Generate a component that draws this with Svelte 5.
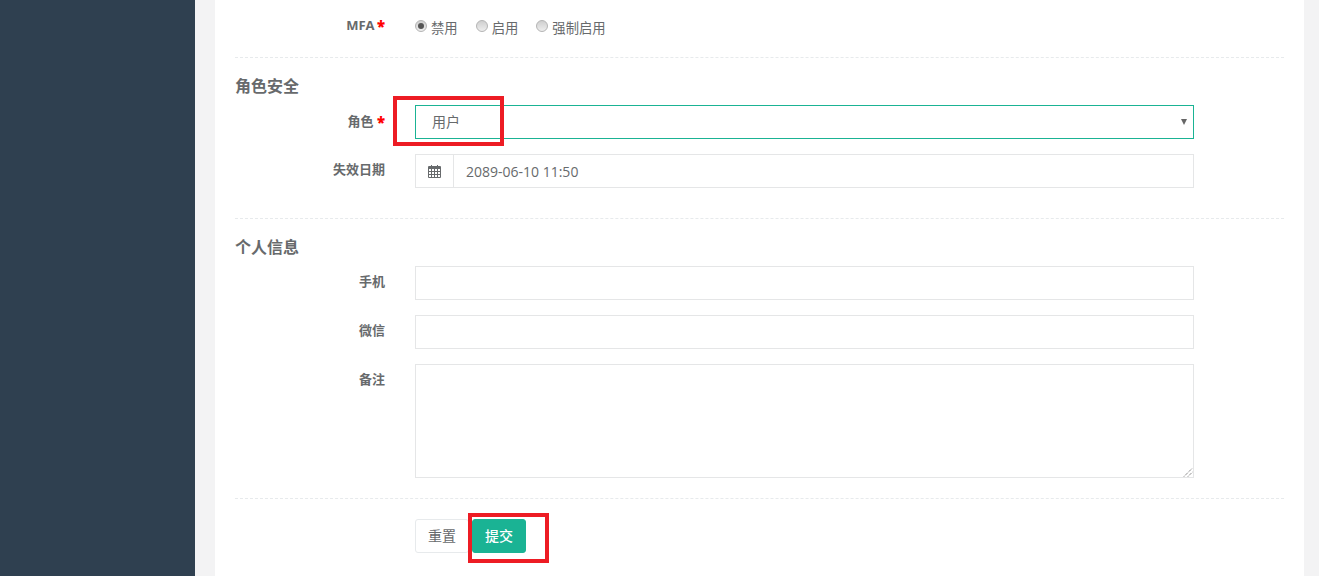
<script>
  const radios = [
    { label: '禁用', checked: true },
    { label: '启用', checked: false },
    { label: '强制启用', checked: false }
  ];
</script>

<div class="page">
  <aside class="sidebar"></aside>
  <main class="wrapper">
    <form class="panel" on:submit|preventDefault>
      <div class="row mfa">
        <span class="label">MFA <b class="req">*</b></span>
        <div class="radios">
          {#each radios as r}
            <span class="radio">
              <span class="dot" class:checked={r.checked}></span>{r.label}
            </span>
          {/each}
        </div>
      </div>

      <div class="divider first"></div>

      <h3>角色安全</h3>
      <div class="row role">
        <span class="label">角色 <b class="req">*</b></span>
        <div class="control select">
          <span>用户</span>
          <i class="caret"></i>
        </div>
        <i class="mark mark-role"></i>
      </div>
      <div class="row date">
        <span class="label">失效日期</span>
        <div class="control group">
          <span class="addon">
            <svg width="13" height="14" viewBox="0 0 13 14">
              <path fill="#676a6c" fill-rule="evenodd" d="M1 2h2V1h1v1h5V1h1v1h2a1 1 0 0 1 1 1v10a1 1 0 0 1-1 1H1a1 1 0 0 1-1-1V3a1 1 0 0 1 1-1zM1 5v2h2V5zm3 0v2h2V5zm3 0v2h2V5zm3 0v2h2V5zM1 8v2h2V8zm3 0v2h2V8zm3 0v2h2V8zm3 0v2h2V8zM1 11v2h2v-2zm3 0v2h2v-2zm3 0v2h2v-2zm3 0v2h2v-2z"/>
            </svg>
          </span>
          <span class="value">2089-06-10 11:50</span>
        </div>
      </div>

      <div class="divider second"></div>

      <h3 class="info">个人信息</h3>
      <div class="row">
        <span class="label">手机</span>
        <div class="control"></div>
      </div>
      <div class="row">
        <span class="label">微信</span>
        <div class="control"></div>
      </div>
      <div class="row">
        <span class="label">备注</span>
        <div class="control textarea">
          <svg class="grip" width="10" height="10" viewBox="0 0 10 10">
            <path stroke="#555" stroke-dasharray="1 1" fill="none" d="M1 9.5 9.5 1M5 9.5 9.5 5"/>
          </svg>
        </div>
      </div>

      <div class="divider third"></div>

      <div class="row actions">
        <span class="label"></span>
        <div class="buttons">
          <button type="button" class="btn reset">重置</button>
          <button type="submit" class="btn submit">提交</button>
          <i class="mark mark-submit"></i>
        </div>
      </div>
    </form>
  </main>
</div>

<style>
  :global(body) {
    margin: 0;
  }

  .page {
    display: flex;
    height: 576px;
    overflow: hidden;
    font-family: "Open Sans", "Noto Sans CJK SC", sans-serif;
    font-size: 13px;
    color: #676a6c;
    background: #f3f3f4;
  }

  .sidebar {
    flex: 0 0 195px;
    background: #2f4050;
  }

  .wrapper {
    flex: 1;
    padding: 0 15px 0 20px;
  }

  .panel {
    height: 100%;
    box-sizing: border-box;
    background: #fff;
    padding: 0 20px;
  }

  .row {
    display: flex;
    position: relative;
    margin-bottom: 15px;
  }

  .label {
    flex: 0 0 150px;
    padding-top: 6px;
    text-align: right;
    font-weight: 700;
    line-height: 19px;
  }

  .req {
    color: #f00;
    font-size: 15px;
    line-height: 14px;
    vertical-align: -2px;
  }

  .control {
    box-sizing: border-box;
    width: 779px;
    height: 34px;
    margin-left: 30px;
    border: 1px solid #e5e6e7;
  }

  .mfa {
    height: 23px;
    padding-top: 11px;
    margin-bottom: 0;
  }

  .mfa .label {
    padding-top: 5px;
  }

  .mfa .req {
    margin-left: -1px;
  }

  .role .label {
    padding-top: 7px;
  }

  .radios {
    display: flex;
    margin-left: 30px;
    padding-top: 6px;
    gap: 18px;
    font-size: 13.33px;
    line-height: 22px;
  }

  .radio {
    display: flex;
    align-items: flex-start;
    gap: 4px;
  }

  .dot {
    box-sizing: border-box;
    width: 12px;
    height: 12px;
    margin-top: 3px;
    border-radius: 50%;
    border: 1px solid #b4b4b4;
    background: linear-gradient(#cfcfcf, #eee);
    position: relative;
  }

  .dot.checked::after {
    content: "";
    position: absolute;
    left: 2px;
    top: 2px;
    width: 6px;
    height: 6px;
    border-radius: 50%;
    background: #555;
  }

  .divider {
    border-top: 1px dashed #e7eaec;
  }

  .divider.first {
    margin-top: 23px;
  }

  .divider.second {
    margin-top: 30px;
  }

  .divider.third {
    margin-top: 20px;
  }

  h3 {
    margin: 18px 0 9px;
    height: 20px;
    font-size: 16px;
    line-height: 20px;
    font-weight: 600;
  }

  .select {
    display: flex;
    align-items: center;
    justify-content: space-between;
    padding: 0 6px 0 16px;
    font-size: 14px;
    border-color: #1ab394;
  }

  .select span {
    margin-top: -2px;
  }

  .caret {
    width: 0;
    height: 0;
    border-left: 3px solid transparent;
    border-right: 3px solid transparent;
    border-top: 6px solid #666;
  }

  .group {
    display: flex;
    align-items: center;
  }

  .addon {
    display: flex;
    align-items: center;
    justify-content: center;
    box-sizing: border-box;
    width: 38px;
    height: 100%;
    border-right: 1px solid #e5e6e7;
  }

  .value {
    padding-left: 12px;
    font-size: 14px;
  }

  .textarea {
    position: relative;
    height: 114px;
  }

  .grip {
    position: absolute;
    right: 0;
    bottom: 0;
  }

  .date {
    margin-bottom: 0;
  }

  .actions {
    margin-top: 20px;
    margin-bottom: 0;
  }

  .buttons {
    position: relative;
    display: flex;
    gap: 0;
    margin-left: 30px;
  }

  .btn {
    box-sizing: border-box;
    height: 34px;
    padding: 0 12px 2px;
    border-radius: 3px;
    border: 1px solid #e7eaec;
    background: #fff;
    color: #676a6c;
    font: inherit;
    font-size: 14px;
  }

  .submit {
    margin-left: 3px;
    border-color: #1ab394;
    background: #1ab394;
    color: #fff;
    font-weight: 500;
  }

  .mark {
    position: absolute;
    box-sizing: border-box;
    border: 4px solid #ed1c24;
  }

  .mark-role {
    left: 158px;
    top: -9px;
    width: 111px;
    height: 50px;
  }

  .mark-submit {
    left: 53px;
    top: -6px;
    width: 81px;
    height: 50px;
  }
</style>
